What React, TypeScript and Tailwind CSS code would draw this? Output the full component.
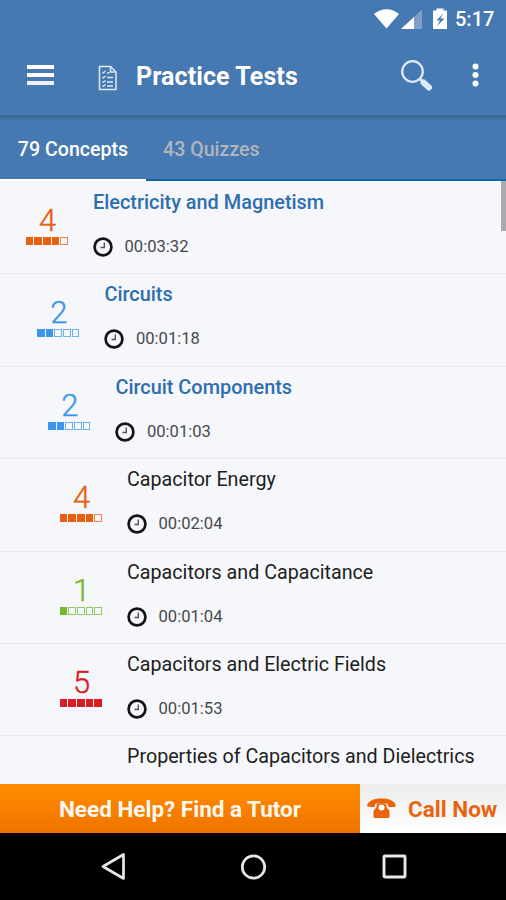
import clsx from 'clsx';

type Concept = {
    title: string;
    time?: string;
    score?: number;
    indent: string;
    color?: string;
    group?: boolean;
};

const CONCEPTS: Concept[] = [
    { title: 'Electricity and Magnetism', time: '00:03:32', score: 4, indent: 'pl-[26px]', color: 'text-[#e9600f]', group: true },
    { title: 'Circuits', time: '00:01:18', score: 2, indent: 'pl-[37.400px]', color: 'text-[#3a97ed]', group: true },
    { title: 'Circuit Components', time: '00:01:03', score: 2, indent: 'pl-[48.400px]', color: 'text-[#3a97ed]', group: true },
    { title: 'Capacitor Energy', time: '00:02:04', score: 4, indent: 'pl-[60px]', color: 'text-[#e9600f]' },
    { title: 'Capacitors and Capacitance', time: '00:01:04', score: 1, indent: 'pl-[60px]', color: 'text-[#72b82c]' },
    { title: 'Capacitors and Electric Fields', time: '00:01:53', score: 5, indent: 'pl-[60px]', color: 'text-[#dc1b22]' },
    { title: 'Properties of Capacitors and Dielectrics', indent: 'pl-[60px]' },
];

function StatusBar() {
    return (
        <div className="flex h-[37px] items-center justify-end pr-[11px]">
            <svg width="77" height="24" viewBox="0 0 77 24" fill="#fff">
                <path d="M0 7C7 .6 18 .6 25 7L12.500 21.500Z" />
                <path d="M48 2.500V22H27Z" fillOpacity=".3" />
                <path d="M40 10V22H27Z" />
                <path d="M59 3.500h3.500V1.500h7v2H73V22H59Z" />
                <path d="M69 6.500L62.500 13.500H66L63 19L70.500 11.500H66.500Z" fill="#4678b1" />
            </svg>
            <span className="ml-[4px] w-[40px] whitespace-nowrap pt-px text-[20px] font-medium leading-none">5:17</span>
        </div>
    );
}

function Toolbar() {
    return (
        <div className="flex h-[78px] items-center">
            <div className="-mt-[2px] ml-[27px] flex w-[27px] flex-col gap-[4px]">
                <span className="h-[4px] bg-white" />
                <span className="h-[4px] bg-white" />
                <span className="h-[4px] bg-white/90" />
            </div>
            <svg className="ml-[44px] mt-[4px]" width="20" height="26" viewBox="0 0 20 26" fill="none" stroke="#dfe9f3" strokeWidth="1.500">
                <path d="M1.500 1.500H12.500L18 7V24.500H1.500Z" />
                <path d="M12.500 1.500V7H18" />
                <path d="M4.500 7l1 1 2-2M4.500 12l1 1 2-2M4.500 16.500l1 1 2-2M4.500 20.500l1 1 2-2" strokeWidth="1.200" />
                <path d="M9 8h2.500M9 12.500h6M9 17h6M9 21h6" strokeWidth="1.300" />
            </svg>
            <h1 className="ml-[18px] flex-1 whitespace-nowrap text-[25px] font-bold leading-none tracking-[0.100px]">Practice Tests</h1>
            <svg className="-mt-[2px] mr-[37px]" width="35" height="33" viewBox="0 0 35 33" fill="none" stroke="#dce9f8">
                <circle cx="12.500" cy="12.500" r="10.300" strokeWidth="2.300" />
                <path d="M20 20l4 4" strokeWidth="2.500" />
                <path d="M23.500 23.500l5.500 5" strokeWidth="6" strokeLinecap="round" />
            </svg>
            <svg className="-mt-[2px] mr-[27px]" width="7" height="24" viewBox="0 0 7 24" fill="#fff">
                <circle cx="3.500" cy="3.500" r="3" />
                <circle cx="3.500" cy="12" r="3" />
                <circle cx="3.500" cy="20.500" r="3" />
            </svg>
        </div>
    );
}

function Tabs() {
    return (
        <div className="flex h-[66px] bg-linear-to-b from-[#3c6492] via-[#4678b1] via-[10%] to-[#4678b1] text-[19.600px] font-medium">
            <div className="flex w-[146px] items-center justify-center border-b-2 border-white pt-[5px]">79 Concepts</div>
            <div className="flex flex-1 items-center border-b-2 border-[#1664a8] pl-[17px] pt-[5px] text-[#aeb5be]">43 Quizzes</div>
        </div>
    );
}

function ScoreMeter({ score, color }: { score: number; color?: string }) {
    return (
        <div className={clsx('-ml-[0.500px] flex flex-col pt-[23px]', color)}>
            <span className="w-[44px] text-center text-[31px] leading-[32px] font-light [-webkit-text-stroke:0.400px_currentColor]">{score}</span>
            <div className="flex gap-[1px]">
                {[1, 2, 3, 4, 5].map(n => (
                    <span key={n} className={clsx('h-[8px] w-[7.700px] border border-current', n <= score ? 'bg-current' : 'opacity-75')} />
                ))}
            </div>
        </div>
    );
}

function ConceptRow({ concept }: { concept: Concept }) {
    return (
        <li className={clsx('flex h-[92.400px] shrink-0 border-b border-[#e9ebf0]', concept.indent)}>
            <div className="w-[67px] shrink-0">
                {concept.score && <ScoreMeter score={concept.score} color={concept.color} />}
            </div>
            <div className="pt-[9px]">
                <div className={clsx('whitespace-nowrap leading-[24px]', concept.group ? 'text-[19.900px] font-medium text-[#2f6eae]' : 'text-[19.700px] text-[#1d1e20]')}>
                    {concept.title}
                </div>
                {concept.time && (
                    <div className="mt-[22px] flex items-center">
                        <svg width="20" height="20" viewBox="0 0 20 20" fill="none" stroke="#141416">
                            <circle cx="10" cy="10" r="8.400" strokeWidth="2.700" />
                            <path d="M11.300 5.500V10.500H7.500" strokeWidth="1.400" stroke="#555" />
                        </svg>
                        <span className="ml-[11.500px] text-[16.600px] leading-[20px] text-[#48494c]">{concept.time}</span>
                    </div>
                )}
            </div>
        </li>
    );
}

function HelpBar() {
    return (
        <div className="flex h-[49px] shrink-0 text-[22.500px] font-bold leading-[28px]">
            <div className="flex w-[360px] items-center justify-center whitespace-nowrap bg-linear-to-b from-[#ff8d00] to-[#f17300] pt-px text-[#fff8f0]">
                Need Help? Find a Tutor
            </div>
            <div className="flex flex-1 items-center whitespace-nowrap bg-linear-to-b from-[#ececeb] to-white pl-[7px] text-[#e8650d]">
                <svg width="29" height="21" viewBox="0 0 29 21" fill="currentColor">
                    <path d="M0 8C1 3 6 .5 14.500 .5S28 3 29 8C26.500 9.500 23 9.500 21 8.500V6C18 4.500 11 4.500 8 6V8.500C6 9.500 2.500 9.500 0 8Z" />
                    <path d="M9.500 6.500Q14.500 3 19.500 6.500V9L22.500 13V18.500Q22.500 20 21 20H8Q6.500 20 6.500 18.500V13L9.500 9Z" />
                    <circle cx="14.500" cy="9.500" r="3" fill="#fff" />
                </svg>
                <span className="ml-[12px] pt-px">Call Now</span>
            </div>
        </div>
    );
}

function NavBar() {
    return (
        <div className="flex h-[67px] shrink-0 items-center bg-black">
            <svg className="ml-[100px]" width="27" height="29" viewBox="0 0 27 29" fill="none" stroke="#e8e8e8" strokeWidth="2.700">
                <path d="M23.500 2.500V26.500L3 14.500Z" strokeLinejoin="round" />
            </svg>
            <svg className="ml-[113px]" width="28" height="28" viewBox="0 0 28 28" fill="none" stroke="#e8e8e8" strokeWidth="2.700">
                <circle cx="13.500" cy="14" r="11.200" />
            </svg>
            <svg className="ml-[114px]" width="25" height="25" viewBox="0 0 25 25" fill="none" stroke="#e8e8e8" strokeWidth="2.900">
                <rect x="2" y="2" width="21" height="21" rx="1" />
            </svg>
        </div>
    );
}

export default function App() {
    return (
        <div className="flex h-[900px] w-[506px] flex-col overflow-hidden bg-[#f5f7fb] font-['Roboto',sans-serif]">
            <header className="shrink-0 bg-[#4678b1] text-white">
                <StatusBar />
                <Toolbar />
                <Tabs />
            </header>
            <main className="relative min-h-0 flex-1 overflow-hidden">
                <ul className="flex flex-col pt-[1px]">
                    {CONCEPTS.map(concept => (
                        <ConceptRow key={concept.title} concept={concept} />
                    ))}
                </ul>
                <div className="absolute right-0 top-0 h-[50px] w-[5px] bg-[#ababad]" />
            </main>
            <HelpBar />
            <NavBar />
        </div>
    );
}
